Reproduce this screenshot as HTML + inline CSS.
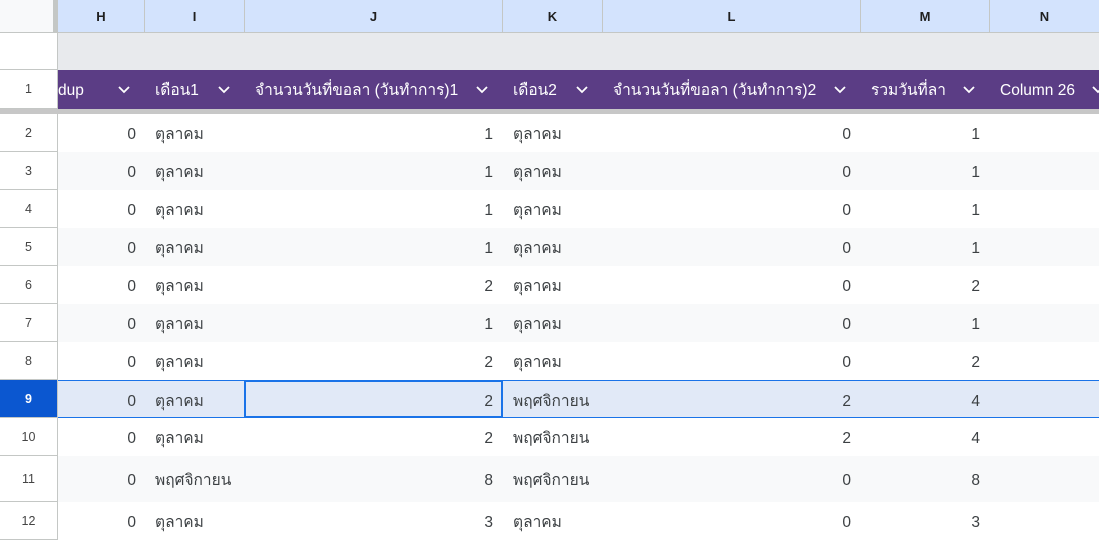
<!DOCTYPE html>
<html><head><meta charset="utf-8"><style>
*{margin:0;padding:0;box-sizing:border-box}
body{width:1099px;height:542px;overflow:hidden;background:#fff;font-family:"Liberation Sans","Noto Sans CJK SC",sans-serif;position:relative}
.a{position:absolute}
.ch{top:0;height:33px;background:#d3e3fd;border-right:1px solid #c4c7c5;border-bottom:1px solid #c4c7c5;font-size:13px;font-weight:bold;color:#1f1f1f;display:flex;align-items:center;justify-content:center}
.rn{left:0;width:58px;border-right:1px solid #c4c7c5;border-bottom:1px solid #c4c7c5;font-size:12.5px;color:#444;display:flex;align-items:center;justify-content:center;background:#fff}
.hd{top:70px;height:39px;background:#5b3d85}
.hs{position:absolute;top:0;height:39px;line-height:41px;color:#fff;font-size:15.5px;white-space:nowrap}
.c{font-size:15.5px;color:#3c4043;white-space:nowrap;top:2px}
.r{text-align:right}
.chev{position:absolute;top:16px;width:12px;height:8px}
</style></head><body>
<div class="a ch" style="left:0;width:58px;background:#f8f9fa;border-right:none"></div>
<div class="a" style="left:53px;top:0;width:5px;height:33px;background:#c4c7c5"></div>
<div class="a ch" style="left:58px;width:87px">H</div>
<div class="a ch" style="left:145px;width:100px">I</div>
<div class="a ch" style="left:245px;width:258px">J</div>
<div class="a ch" style="left:503px;width:100px">K</div>
<div class="a ch" style="left:603px;width:258px">L</div>
<div class="a ch" style="left:861px;width:129px">M</div>
<div class="a ch" style="left:990px;width:109px;border-right:none">N</div>
<div class="a" style="left:58px;top:33px;width:1041px;height:37px;background:#e8eaed"></div>
<div class="a rn" style="top:33px;height:37px"></div>
<div class="a rn" style="top:70px;height:39px">1</div>
<div class="a hd" style="left:58px;width:1041px">
<span class="hs" style="left:0">dup</span>
<span class="hs" style="left:97px">เดือน1</span>
<span class="hs" style="left:197px">จำนวนวันที่ขอลา (วันทำการ)1</span>
<span class="hs" style="left:455px">เดือน2</span>
<span class="hs" style="left:555px">จำนวนวันที่ขอลา (วันทำการ)2</span>
<span class="hs" style="left:813px">รวมวันที่ลา</span>
<span class="hs" style="left:942px">Column 26</span>
<svg class="chev" style="left:60px" viewBox="0 0 12 8"><path d="M1 1l5 5 5-5" stroke="#fff" stroke-width="1.8" fill="none"/></svg>
<svg class="chev" style="left:160px" viewBox="0 0 12 8"><path d="M1 1l5 5 5-5" stroke="#fff" stroke-width="1.8" fill="none"/></svg>
<svg class="chev" style="left:418px" viewBox="0 0 12 8"><path d="M1 1l5 5 5-5" stroke="#fff" stroke-width="1.8" fill="none"/></svg>
<svg class="chev" style="left:518px" viewBox="0 0 12 8"><path d="M1 1l5 5 5-5" stroke="#fff" stroke-width="1.8" fill="none"/></svg>
<svg class="chev" style="left:776px" viewBox="0 0 12 8"><path d="M1 1l5 5 5-5" stroke="#fff" stroke-width="1.8" fill="none"/></svg>
<svg class="chev" style="left:905px" viewBox="0 0 12 8"><path d="M1 1l5 5 5-5" stroke="#fff" stroke-width="1.8" fill="none"/></svg>
<svg class="chev" style="left:1034px" viewBox="0 0 12 8"><path d="M1 1l5 5 5-5" stroke="#fff" stroke-width="1.8" fill="none"/></svg>
</div>
<div class="a" style="left:0;top:109px;width:1099px;height:5px;background:#c7c7c7"></div>
<div id="rows"></div>
<script>
var d=[[2,114,38,'ตุลาคม',1,'ตุลาคม',0,1],[3,152,38,'ตุลาคม',1,'ตุลาคม',0,1],[4,190,38,'ตุลาคม',1,'ตุลาคม',0,1],[5,228,38,'ตุลาคม',1,'ตุลาคม',0,1],[6,266,38,'ตุลาคม',2,'ตุลาคม',0,2],[7,304,38,'ตุลาคม',1,'ตุลาคม',0,1],[8,342,38,'ตุลาคม',2,'ตุลาคม',0,2],[9,380,38,'ตุลาคม',2,'พฤศจิกายน',2,4],[10,418,38,'ตุลาคม',2,'พฤศจิกายน',2,4],[11,456,46,'พฤศจิกายน',8,'พฤศจิกายน',0,8],[12,502,38,'ตุลาคม',3,'ตุลาคม',0,3]];
var h='';
d.forEach(function(r,i){
var bg=r[0]==9?'#e1e9f7':(i%2==1?'#f8f9fa':'#fff');
var sel=r[0]==9;
var lh='height:'+(r[2]-2)+'px;line-height:'+(r[2]-1)+'px;';
h+='<div class="a rn" style="top:'+r[1]+'px;height:'+r[2]+'px;'+(sel?'background:#0b57d0;color:#fff;font-weight:bold;':'')+'">'+r[0]+'</div>';
h+='<div class="a" style="left:58px;top:'+r[1]+'px;width:1041px;height:'+r[2]+'px;background:'+bg+';'+(sel?'border-top:1px solid #1a73e8;border-bottom:1px solid #1a73e8;':'')+'">';
h+='<div class="a c r" style="'+lh+'left:0;width:78px">0</div>';
h+='<div class="a c" style="'+lh+'left:97px">'+r[3]+'</div>';
h+='<div class="a c r" style="'+lh+'left:187px;width:248px">'+r[4]+'</div>';
h+='<div class="a c" style="'+lh+'left:455px">'+r[5]+'</div>';
h+='<div class="a c r" style="'+lh+'left:545px;width:248px">'+r[6]+'</div>';
h+='<div class="a c r" style="'+lh+'left:803px;width:119px">'+r[7]+'</div>';
if(sel)h+='<div class="a" style="left:186px;top:-1px;width:259px;height:'+(r[2])+'px;border:2px solid #1a73e8"></div>';
h+='</div>';
});
document.getElementById('rows').innerHTML=h;
</script>
</body></html>
